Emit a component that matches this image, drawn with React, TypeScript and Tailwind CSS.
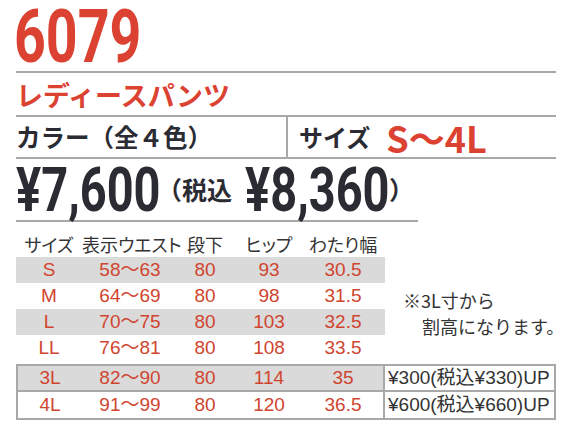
import React from "react";

const RED = "text-[#dc4232]";

const cols = ["w-[66px]", "w-[96px]", "w-[54px]", "w-[74px]", "w-[74px]"];
const boxCols = ["w-[64px]", "w-[96px]", "w-[54px]", "w-[74px]", "w-[74px]"];

const rows = [
  ["S", "58～63", "80", "93", "30.5"],
  ["M", "64～69", "80", "98", "31.5"],
  ["L", "70～75", "80", "103", "32.5"],
  ["LL", "76～81", "80", "108", "33.5"],
];

const boxRows = [
  { v: ["3L", "82～90", "80", "114", "35"], extra: "¥300(税込¥330)UP", gray: true },
  { v: ["4L", "91～99", "80", "120", "36.5"], extra: "¥600(税込¥660)UP", gray: false },
];

function Line({ w }: { w: string }) {
  return <div className={`ml-[16px] h-[2px] bg-[#a8a8a8] ${w}`} />;
}

export default function App() {
  return (
    <div className="w-[569px] h-[430px] bg-white overflow-hidden font-['Noto_Sans_CJK_JP',sans-serif] text-[#2b2b33]">
      <div className="h-[71px] pl-[14px] flex items-center">
        <span className={`inline-block origin-left scale-x-[0.74] text-[75px] leading-[64px] font-bold ${RED} font-['Roboto',sans-serif]`}>
          6079
        </span>
      </div>
      <Line w="w-[540px]" />
      <div className={`h-[42px] pl-[16px] flex items-center text-[27px] font-bold leading-none ${RED}`}>
        レディースパンツ
      </div>
      <Line w="w-[540px]" />
      <div className="ml-[16px] w-[540px] h-[40px] flex">
        <div className="w-[270px] flex items-center text-[24.5px] font-bold leading-none">カラー（全４色）</div>
        <div className="w-[2px] bg-[#a8a8a8]" />
        <div className="flex items-center pl-[11px]">
          <span className="text-[24px] font-bold leading-none">サイズ</span>
          <span className={`ml-[16px] text-[36px] font-bold leading-none ${RED}`}>S～4L</span>
        </div>
      </div>
      <Line w="w-[540px]" />
      <div className="h-[61px] pl-[16px] flex items-center font-bold">
        <span className="inline-block w-[141px]">
          <span className="inline-block origin-left scale-x-[0.77] text-[61px] leading-[60px] font-['Roboto',sans-serif] whitespace-nowrap">
            ¥7,600
          </span>
        </span>
        <span className="text-[25px] leading-none">（税込</span>
        <span className="inline-block w-[138px] ml-[13px]">
          <span className="inline-block origin-left scale-x-[0.77] text-[61px] leading-[60px] font-['Roboto',sans-serif] whitespace-nowrap">
            ¥8,360
          </span>
        </span>
        <span className="ml-[6px] text-[25px] leading-none">）</span>
      </div>
      <Line w="w-[402px]" />

      <div className="ml-[16px]">
        <div className="flex h-[35px] pt-[11px] text-[18px] leading-[22px] text-[#333] [font-feature-settings:'palt']">
          {["サイズ", "表示ウエスト", "段下", "ヒップ", "わたり幅"].map((h, i) => (
            <div key={h} className={`${cols[i]} text-center whitespace-nowrap`}>
              {h}
            </div>
          ))}
        </div>
        <div className="flex">
          <div className="w-[369px]">
            {rows.map((r, ri) => (
              <div
                key={r[0]}
                className={`flex h-[26px] items-center text-[19px] leading-[26px] text-[#d0452f] font-['Liberation_Sans','Noto_Sans_CJK_JP',sans-serif] ${
                  ri % 2 === 0 ? "bg-[#dadada]" : ""
                }`}
              >
                {r.map((c, i) => (
                  <div key={i} className={`${cols[i]} text-center`}>
                    {c}
                  </div>
                ))}
              </div>
            ))}
          </div>
          <div className="pl-[18px] pt-[30px] text-[18px] leading-[26px] text-[#333]">
            <div>※3L寸から</div>
            <div className="pl-[19px]">割高になります。</div>
          </div>
        </div>
        <div className="h-[3px]" />
        <div className="w-[540px] border-2 border-[#a8a8a8] font-['Liberation_Sans','Noto_Sans_CJK_JP',sans-serif] text-[19px]">
          {boxRows.map((r, ri) => (
            <div key={ri} className={`flex h-[26px] ${ri === 0 ? "border-b-2 border-[#a8a8a8]" : ""}`}>
              <div className={`w-[365px] flex items-center text-[#d0452f] ${r.gray ? "bg-[#dadada]" : ""}`}>
                {r.v.map((c, i) => (
                  <div key={i} className={`${boxCols[i]} text-center`}>
                    {c}
                  </div>
                ))}
              </div>
              <div className="w-[2px] bg-[#a8a8a8]" />
              <div className="flex-1 flex items-center pl-[3px] text-[#333] whitespace-nowrap">{r.extra}</div>
            </div>
          ))}
        </div>
      </div>
    </div>
  );
}
